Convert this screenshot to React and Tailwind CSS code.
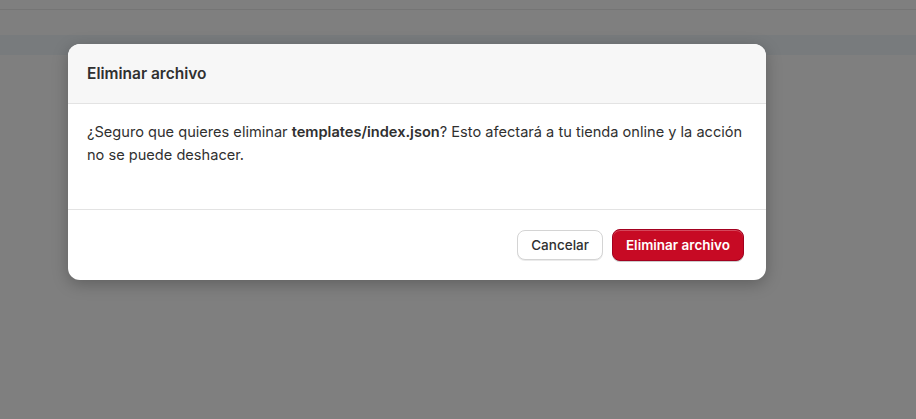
export default function App() {
  return (
    <div className="relative h-[419px] w-[916px] overflow-hidden bg-white font-['Inter',sans-serif] text-[#303030]">
      {/* page behind the overlay */}
      <div className="h-[10px] border-b border-[#ebebeb] bg-white" />
      <div className="h-[25px] bg-white" />
      <div className="h-[20px] bg-[#f0f6fa]" />

      <div className="absolute inset-0 flex items-start justify-start bg-black/50 pl-[68px] pt-[44px]">
        <div className="w-[698px] overflow-hidden rounded-xl bg-white shadow-[0_4px_16px_rgba(0,0,0,0.25)]">
          <div className="flex h-[60px] items-center border-b border-[#e3e3e3] bg-[#f7f7f7] px-[19px]">
            <h2 className="text-[15.5px] font-semibold">Eliminar archivo</h2>
          </div>
          <div className="h-[106px] border-b border-[#e3e3e3] px-[19px] pt-[17px] text-[14.6px] leading-[23px]">
            ¿Seguro que quieres eliminar <span className="font-semibold">templates/index.json</span>? Esto afectará a tu tienda online y la acción no se puede deshacer.
          </div>
          <div className="flex h-[70px] items-center justify-end gap-[9px] pr-[22px]">
            <button className="h-[30px] rounded-lg border border-[#d4d4d4] bg-white px-[13px] text-[13.5px] font-medium text-[#303030] shadow-[0_1px_0_rgba(0,0,0,0.08)]">
              Cancelar
            </button>
            <button className="h-[32px] rounded-lg border border-[#a3001f] bg-[#c70a24] px-[13px] text-[13.5px] font-semibold text-white shadow-[inset_0_1px_0_rgba(255,255,255,0.25),0_1px_0_rgba(0,0,0,0.2)]">
              Eliminar archivo
            </button>
          </div>
        </div>
      </div>
    </div>
  );
}
